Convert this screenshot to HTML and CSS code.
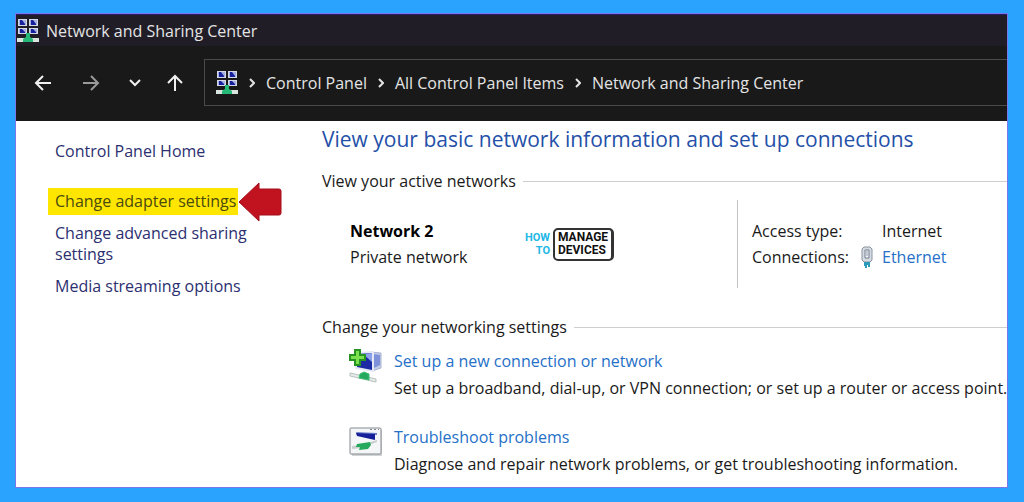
FILE: index.html
```
<!DOCTYPE html>
<html lang="en">
<head>
  <meta charset="UTF-8" />
  <meta name="viewport" content="width=device-width, initial-scale=1.0"/>
  <title>Network and Sharing Center</title>
  <link rel="stylesheet" href="styles.css">
</head>
<body>
  <svg class="sprite" aria-hidden="true">
    <symbol id="network" viewBox="0 0 22 24">
      <path fill="#d5d8e6" d="M1 0h9v7H1zM12 0h9v7h-9zM1 9h9v6H1zM12 9h9v6h-9z"/>
      <path fill="#a3addf" d="M2 1h7v5H2zM13 1h7v5h-7zM2 10h7v4H2zM13 10h7v4h-7z"/>
      <path fill="#16209c" d="M3 1h2l3 4v1H3zM14 1h2l3 4v1h-5zM3 10h2l3 3v1H3zM14 10h2l3 3v1h-5z"/>
      <path fill="#d8e4dd" d="M0 19h22v4H0z"/>
      <path fill="#25b978" d="M9 14h4v4l3 2v3H6v-3l3-2z"/>
    </symbol>
  </svg>

  <div class="window">
    <header class="titlebar">
      <svg class="net-icon"><use href="#network"/></svg>
      <span>Network and Sharing Center</span>
    </header>

    <nav class="toolbar">
      <div class="nav-buttons">
        <button type="button" aria-label="Back">
          <svg viewBox="0 0 18 18"><path d="M17 9H2M9 2L2 9l7 7"/></svg>
        </button>
        <button type="button" class="dim" aria-label="Forward">
          <svg viewBox="0 0 18 18"><path d="M1 9h15M9 2l7 7-7 7"/></svg>
        </button>
        <button type="button" class="small" aria-label="Recent locations">
          <svg viewBox="0 0 18 18"><path d="M4 6l5 5 5-5"/></svg>
        </button>
        <button type="button" class="small" aria-label="Up">
          <svg viewBox="0 0 18 18"><path d="M9 17V2M2 9l7-7 7 7"/></svg>
        </button>
      </div>
      <div class="address">
        <svg class="net-icon"><use href="#network"/></svg>
        <svg class="chevron" viewBox="0 0 6 10"><path d="M1 1l4 4-4 4"/></svg>
        <a href="#">Control Panel</a>
        <svg class="chevron" viewBox="0 0 6 10"><path d="M1 1l4 4-4 4"/></svg>
        <a href="#">All Control Panel Items</a>
        <svg class="chevron" viewBox="0 0 6 10"><path d="M1 1l4 4-4 4"/></svg>
        <a href="#">Network and Sharing Center</a>
      </div>
    </nav>

    <div class="content">
      <aside class="sidebar">
        <a class="home" href="#">Control Panel Home</a>
        <div class="marked">
          <a class="highlight" href="#">Change adapter settings</a>
          <svg class="arrow" viewBox="0 0 44 40"><path fill="#c1121f" stroke="#a30f1a" d="M1 20L21 1v6h20q2 0 2 2v22q0 2-2 2H21v6z"/></svg>
        </div>
        <a href="#">Change advanced sharing settings</a>
        <a href="#">Media streaming options</a>
      </aside>

      <main>
        <h1>View your basic network information and set up connections</h1>

        <h2>View your active networks</h2>
        <section class="active">
          <div class="network">
            <strong>Network 2</strong>
            <span>Private network</span>
          </div>
          <div class="logo">
            <div class="logo-left"><span>HOW</span><span>TO</span></div>
            <div class="logo-box"><span>MANAGE</span><span>DEVICES</span></div>
          </div>
          <dl class="details">
            <dt>Access type:</dt>
            <dd>Internet</dd>
            <dt>Connections:</dt>
            <dd>
              <svg class="plug" viewBox="0 0 14 22">
                <path fill="#d6dbe2" stroke="#8a94a3" d="M2 3l2-2h6l2 2v11l-2 2H4l-2-2z"/>
                <path fill="#f4f6f9" stroke="#737d8e" d="M5 4h4v8H5z"/>
                <path fill="#c3cad4" d="M6 5h2v5H6z"/>
                <path fill="#2a9ab8" d="M4 16h6v5H8v-2H7v3H5v-2H4z"/>
              </svg>
              <a href="#">Ethernet</a>
            </dd>
          </dl>
        </section>

        <h2>Change your networking settings</h2>
        <section class="task">
          <svg viewBox="0 0 34 36">
            <path fill="#c3cce6" stroke="#a9b4d0" d="M20 4l12 1v15l-9 3z"/>
            <path fill="#7f91d8" d="M24 6l7 1v10l-6 3z"/>
            <path fill="#e4e9f5" d="M6 4l19-1v21L6 21z"/>
            <path fill="#1c2ba4" d="M8 6l15-1v17L8 19z"/>
            <path fill="#8da0ea" d="M14 6l9-1v9z"/>
            <path fill="#e6ecea" stroke="#b7c2bd" d="M1 25l26 6v3L1 28z"/>
            <path fill="#25a95c" stroke="#3cbd72" d="M11 26l4-2 5 2v6l-10-2z"/>
            <path fill="#7be04e" stroke="#259421" stroke-width="2" d="M6 2h5v5h5v5h-5v5H6v-5H1V7h5z"/>
          </svg>
          <div>
            <a href="#">Set up a new connection or network</a>
            <p>Set up a broadband, dial-up, or VPN connection; or set up a router or access point.</p>
          </div>
        </section>
        <section class="task">
          <svg viewBox="0 0 34 36">
            <path fill="#d2d4d6" d="M3 6h30v26H3z"/>
            <rect x="1" y="4" width="31" height="26" rx="1" fill="#f4f6f7" stroke="#858a8e"/>
            <path fill="#85898d" d="M21 5h2v1h-2zM25 5h2v1h-2zM29 5h1v1h-1z"/>
            <path fill="#6f80c9" d="M7 8l21 1v2L8 10z"/>
            <path fill="#15209a" d="M7 9l19 1v6L8 12z"/>
            <path fill="#c8d0cd" d="M3 22l9-1 16-5v2l-16 6-9 1z"/>
            <path fill="#25a95c" d="M8 20l13-2 1 3-3 4-9 1 1-3H7z"/>
          </svg>
          <div>
            <a href="#">Troubleshoot problems</a>
            <p>Diagnose and repair network problems, or get troubleshooting information.</p>
          </div>
        </section>
      </main>
    </div>
  </div>
</body>
</html>
```
FILE: styles.css
```
* {
  box-sizing: border-box;
}
body {
  margin: 0;
  min-height: 100vh;
  padding: 13px 16px 14px 15px;
  display: flex;
  background-color: #2aa3ff;
  color: #1a1a1a;
  font-family: "Open Sans", "Noto Sans", sans-serif;
  font-size: 16px;
  line-height: 22px;
}
a {
  color: #2670c8;
  text-decoration: none;
}
h1, h2, p, dl, dd {
  margin: 0;
  font-weight: normal;
}
.sprite {
  position: absolute;
  width: 0;
  height: 0;
}
.window {
  flex: 1;
  min-width: 0;
  display: flex;
  flex-direction: column;
  border: 1px solid #7a78e8;
  background-color: #fff;
}
.titlebar {
  display: flex;
  align-items: center;
  gap: 7px;
  height: 32px;
  padding-left: 1px;
  border-top: 1px solid #2c1c70;
  background-color: #211d27;
  color: #e4e4e4;
}
.net-icon {
  width: 22px;
  height: 24px;
  flex: none;
}
.toolbar {
  display: flex;
  align-items: center;
  height: 75px;
  padding-bottom: 2px;
  background-color: #191919;
}
.nav-buttons {
  display: flex;
  gap: 12px;
  padding-left: 9px;
}
.nav-buttons button {
  display: flex;
  justify-content: center;
  width: 36px;
  padding: 8px 0;
  border: none;
  background: none;
  color: #f0f0f0;
}
.nav-buttons .dim {
  color: #9a9a9a;
}
.nav-buttons .small {
  width: 28px;
}
.nav-buttons svg {
  width: 18px;
  height: 18px;
}
.nav-buttons path, .chevron path {
  fill: none;
  stroke: currentColor;
  stroke-width: 2;
}
.address {
  flex: 1;
  display: flex;
  align-items: center;
  gap: 11px;
  height: 47px;
  margin-left: 15px;
  padding-left: 11px;
  border: 1px solid #4a4a4a;
  border-right: none;
  color: #e4e4e4;
  white-space: nowrap;
}
.address a {
  color: #e4e4e4;
}
.chevron {
  width: 6px;
  height: 10px;
  flex: none;
}
.content {
  flex: 1;
  display: flex;
}
.sidebar {
  width: 306px;
  flex: none;
  display: flex;
  flex-direction: column;
  gap: 11px;
  padding: 20px 60px 0 39px;
  line-height: 21px;
}
.sidebar a {
  color: #2c2f70;
}
.sidebar .home {
  margin-bottom: 18px;
}
.marked {
  display: flex;
  align-items: center;
  margin: -3px -60px -3px -7px;
}
.sidebar .highlight {
  padding: 3px 2px 3px 7px;
  background-color: #ffe600;
  color: #4a4a10;
  white-space: nowrap;
}
.arrow {
  width: 44px;
  height: 40px;
  margin: -7px 0;
  flex: none;
}
main {
  flex: 1;
  min-width: 0;
}
h1 {
  padding-top: 3px;
  color: #2450a8;
  font-size: 21px;
  line-height: 30px;
  white-space: nowrap;
}
h2 {
  display: flex;
  align-items: center;
  gap: 7px;
  margin-top: 16px;
  font-size: 16px;
  white-space: nowrap;
}
h2::after {
  content: "";
  flex: 1;
  height: 1px;
  background-color: #cfcfcf;
}
.active {
  display: flex;
  align-items: center;
  height: 88px;
  margin: 8px 0 28px;
  padding-left: 28px;
  line-height: 26px;
}
.network {
  display: flex;
  flex-direction: column;
  width: 175px;
}
.network strong {
  color: #000;
}
.logo {
  display: flex;
  align-items: center;
  gap: 3px;
  font-family: Roboto, "Liberation Sans", sans-serif;
  font-size: 12px;
  font-weight: bold;
  line-height: 13px;
}
.logo-left, .logo-box {
  display: flex;
  flex-direction: column;
}
.logo-left {
  align-items: flex-end;
  color: #22b8e6;
  font-size: 11px;
}
.logo-box {
  padding: 1px 3px 2px;
  border: 2px solid #333;
  border-right-width: 3px;
  border-radius: 5px;
  color: #111;
}
.details {
  display: grid;
  grid-template-columns: 130px auto;
  align-content: center;
  height: 88px;
  width: 270px;
  margin-left: auto;
  padding-left: 14px;
  border-left: 1px solid #c4c4c4;
}
.details dd {
  display: flex;
  align-items: center;
}
.plug {
  width: 14px;
  height: 22px;
  margin-left: -22px;
  margin-right: 8px;
}
.task {
  display: flex;
  gap: 11px;
  padding: 10px 0 0 27px;
  line-height: 27px;
}
.task + .task {
  padding-top: 22px;
}
.task svg {
  width: 34px;
  height: 36px;
  flex: none;
}
.task p {
  white-space: nowrap;
}
```
